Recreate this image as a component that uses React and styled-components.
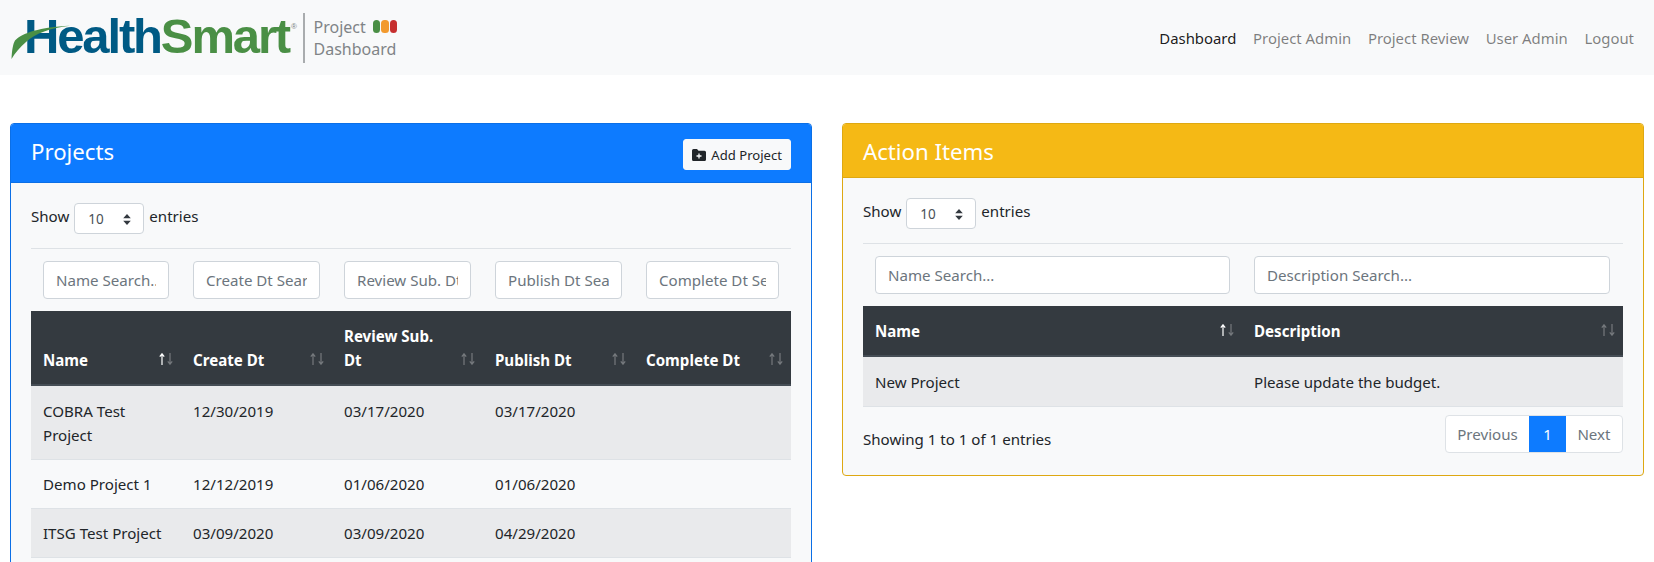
import React from "react";
import styled, { createGlobalStyle } from "styled-components";

const GlobalStyle = createGlobalStyle`
  html, body {
    margin: 0;
    padding: 0;
    background: #fff;
    overflow: hidden;
  }
  body {
    font-family: "Noto Sans", "Open Sans", sans-serif;
    font-size: 15.1px;
    line-height: 24px;
    color: #212529;
  }
  * {
    box-sizing: border-box;
  }
`;

const Page = styled.div`
  width: 1654px;
  height: 562px;
  overflow: hidden;
`;

const Navbar = styled.nav`
  display: flex;
  align-items: center;
  justify-content: space-between;
  height: 75px;
  padding: 0 20px 0 12px;
  background: #f8f9fa;
`;

const Brand = styled.div`
  display: flex;
  align-items: center;
  height: 50px;
`;

const LogoMark = styled.div`
  position: relative;
  width: 285px;
  height: 46px;
  padding-left: 12px;
  font-family: "Liberation Sans", sans-serif;
  font-weight: 700;
  font-size: 49px;
  line-height: 43px;
  letter-spacing: -2.15px;
  white-space: nowrap;
`;

const Swoosh = styled.svg`
  position: absolute;
  left: -1px;
  top: 9.5px;
`;

const LogoText = styled.span`
  color: ${(p) => p.$color};
`;

const Registered = styled.span`
  position: absolute;
  left: 279px;
  top: 8px;
  font-size: 8px;
  font-weight: 400;
  line-height: 8px;
  letter-spacing: 0;
  color: #7a7f83;
`;

const BrandRule = styled.div`
  width: 1.5px;
  height: 50px;
  margin: 0 9px 0 6px;
  background: #a9acae;
`;

const BrandTitle = styled.div`
  display: flex;
  flex-direction: column;
  font-size: 16px;
  line-height: 22px;
  color: #808487;
`;

const TitleRow = styled.div`
  display: flex;
  align-items: center;
  gap: 7px;
`;

const Lights = styled.div`
  display: flex;
  gap: 1px;
`;

const Light = styled.span`
  width: 7.5px;
  height: 13px;
  border-radius: 3.5px;
  background: ${(p) => p.$color};
`;

const NavLinks = styled.div`
  display: flex;
  gap: 16.7px;
`;

const NavLink = styled.a`
  font-size: 14.9px;
  color: ${(p) => (p.$active ? "rgba(0,0,0,0.9)" : "rgba(0,0,0,0.5)")};
`;

const Columns = styled.main`
  display: grid;
  grid-template-columns: 802px 802px;
  justify-content: space-between;
  align-items: start;
  padding: 48px 10px 0;
`;

const Card = styled.section`
  border: 1px solid ${(p) => p.$border};
  border-radius: 4px;
  background: #f8f9fa;
  overflow: hidden;
`;

const CardHeader = styled.header`
  display: flex;
  align-items: flex-start;
  justify-content: space-between;
  height: ${(p) => p.$height}px;
  padding: 0 20px;
  border-bottom: 1px solid ${(p) => p.$border};
  background: ${(p) => p.$color};
  color: #fff;
`;

const CardTitle = styled.h4`
  margin: 0;
  font-size: 22.2px;
  font-weight: 400;
  line-height: 55px;
`;

const AddButton = styled.button`
  display: flex;
  align-items: center;
  gap: 5px;
  height: 31px;
  margin-top: 15px;
  padding: 0 8px;
  border: 1px solid #f8f9fa;
  border-radius: 3px;
  background: #f8f9fa;
  color: #212529;
  font-family: inherit;
  font-size: 13.1px;
`;

const CardBody = styled.div`
  padding: 20px 20px 22px;
`;

const LengthRow = styled.div`
  display: flex;
  align-items: flex-start;
  gap: 5px;
  padding-bottom: 14px;
  border-bottom: 1px solid #dee2e6;
  line-height: 27px;
`;

const LengthSelect = styled.div`
  display: flex;
  align-items: center;
  justify-content: space-between;
  width: 70px;
  height: 31px;
  padding: 1px 12px 0 13px;
  border: 1px solid #ced4da;
  border-radius: 4px;
  background: #fff;
  color: #495057;
  font-size: 13.5px;
`;

const FilterRow = styled.div`
  display: grid;
  grid-template-columns: ${(p) => p.$cols};
  padding: 12px 0;
`;

const FilterCell = styled.div`
  padding: 0 12px;
`;

const FilterInput = styled.input`
  display: block;
  width: 100%;
  height: 38px;
  padding: 0 12px;
  border: 1px solid #ced4da;
  border-radius: 4px;
  background: #fff;
  font-family: inherit;
  font-size: 15.1px;
  color: #495057;

  &::placeholder {
    color: #6c757d;
    opacity: 1;
  }
`;

const Table = styled.table`
  width: 100%;
  border-collapse: collapse;
  table-layout: fixed;
`;

const HeadCell = styled.th`
  position: relative;
  width: ${(p) => p.$width}px;
  padding: 13px 30px 12px 12px;
  border-bottom: 2px solid #454d55;
  background: #343a40;
  color: #fff;
  font-size: 15.1px;
  font-weight: 700;
  line-height: 24px;
  text-align: left;
  vertical-align: bottom;
`;

const SortIcon = styled.svg`
  position: absolute;
  right: 8px;
  bottom: 19px;
`;

const SortArrow = styled.path`
  fill: none;
  stroke: #fff;
  stroke-width: 1.2;
  opacity: ${(p) => (p.$on ? 1 : 0.32)};
`;

const Row = styled.tr`
  background: ${(p) => (p.$striped ? "#e9eaec" : "transparent")};

  &:first-child td {
    padding-top: 13px;
  }
`;

const Cell = styled.td`
  padding: 12px;
  border-bottom: 1px solid #dee2e6;
  font-size: 15.1px;
  line-height: 24px;
  vertical-align: top;
`;

const TableFooter = styled.div`
  display: flex;
  align-items: flex-start;
  justify-content: space-between;
  padding-top: 8px;
`;

const FooterInfo = styled.div`
  padding-top: 12px;
`;

const Pager = styled.div`
  display: flex;
  height: 38px;
  border: 1px solid #dee2e6;
  border-radius: 4px;
  background: #fff;
  overflow: hidden;
`;

const PageItem = styled.span`
  display: flex;
  align-items: center;
  padding: 0 ${(p) => (p.$active ? 14 : 11.5)}px;
  background: ${(p) => (p.$active ? "#0d7bff" : "transparent")};
  color: ${(p) => (p.$active ? "#fff" : "#6c757d")};
`;

const projects = [
  ["COBRA Test Project", "12/30/2019", "03/17/2020", "03/17/2020", ""],
  ["Demo Project 1", "12/12/2019", "01/06/2020", "01/06/2020", ""],
  ["ITSG Test Project", "03/09/2020", "03/09/2020", "04/29/2020", ""],
];

const projectCols = [
  { name: "Name", search: "Name Search...", width: 150, on: true },
  { name: "Create Dt", search: "Create Dt Search...", width: 151 },
  { name: "Review Sub. Dt", search: "Review Sub. Dt Search...", width: 151 },
  { name: "Publish Dt", search: "Publish Dt Search...", width: 151 },
  { name: "Complete Dt", search: "Complete Dt Search...", width: 157 },
];

const Sort = ({ on }) => (
  <SortIcon width="14" height="12" viewBox="0 0 14 12">
    <SortArrow $on={on} d="M3 12V1M.8 3.600L3 .8l2.200 2.800" />
    <SortArrow d="M11 0v11M8.800 8.400L11 11.200l2.200-2.800" />
  </SortIcon>
);

const Logo = () => (
  <LogoMark>
    <LogoText $color="#005a84">Health</LogoText>
    <LogoText $color="#4a8f45">Smart</LogoText>
    <Registered>®</Registered>
    <Swoosh width="60" height="36" viewBox="0 0 60 36">
      <path
        d="M.5 35C1 26 2 20 4 16.500C11 9 29 3 59 1.700C39 4 25 9 15 18C9 23 4 29 .5 35Z"
        fill="#4a8f45"
      />
    </Swoosh>
  </LogoMark>
);

const FolderPlus = () => (
  <svg width="14" height="12" viewBox="0 0 14 12">
    <path
      d="M1.500 0h3.500l1.500 1.800h6a1.500 1.500 0 0 1 1.500 1.500v7.200a1.500 1.500 0 0 1-1.500 1.500h-11a1.500 1.500 0 0 1-1.500-1.500v-9a1.500 1.500 0 0 1 1.500-1.500z"
      fill="#212529"
    />
    <path d="M7 4.500v5M4.500 7h5" stroke="#f8f9fa" strokeWidth="1.300" />
  </svg>
);

const SelectCaret = () => (
  <svg width="8" height="11" viewBox="0 0 8 11">
    <path d="M4 0L7.800 4.300H.2zM4 11L.2 6.700h7.600z" fill="#343a40" />
  </svg>
);

const Length = () => (
  <LengthRow>
    Show
    <LengthSelect>
      10
      <SelectCaret />
    </LengthSelect>
    entries
  </LengthRow>
);

export default function App() {
  return (
    <Page>
      <GlobalStyle />
      <Navbar>
        <Brand>
          <Logo />
          <BrandRule />
          <BrandTitle>
            <TitleRow>
              Project
              <Lights>
                <Light $color="#4a8f45" />
                <Light $color="#f29a2e" />
                <Light $color="#c62f2f" />
              </Lights>
            </TitleRow>
            Dashboard
          </BrandTitle>
        </Brand>
        <NavLinks>
          <NavLink $active>Dashboard</NavLink>
          <NavLink>Project Admin</NavLink>
          <NavLink>Project Review</NavLink>
          <NavLink>User Admin</NavLink>
          <NavLink>Logout</NavLink>
        </NavLinks>
      </Navbar>
      <Columns>
        <Card $border="#0b6fe6">
          <CardHeader $color="#0d7bff" $border="#0b6fe6" $height={59}>
            <CardTitle>Projects</CardTitle>
            <AddButton>
              <FolderPlus />
              Add Project
            </AddButton>
          </CardHeader>
          <CardBody>
            <Length />
            <FilterRow $cols="150px 151px 151px 151px 157px">
              {projectCols.map((c) => (
                <FilterCell key={c.name}>
                  <FilterInput placeholder={c.search} />
                </FilterCell>
              ))}
            </FilterRow>
            <Table>
              <thead>
                <tr>
                  {projectCols.map((c) => (
                    <HeadCell key={c.name} $width={c.width}>
                      {c.name}
                      <Sort on={c.on} />
                    </HeadCell>
                  ))}
                </tr>
              </thead>
              <tbody>
                {projects.map((p, i) => (
                  <Row key={p[0]} $striped={i % 2 === 0}>
                    {p.map((v, j) => (
                      <Cell key={j}>{v}</Cell>
                    ))}
                  </Row>
                ))}
              </tbody>
            </Table>
          </CardBody>
        </Card>
        <Card $border="#dea812">
          <CardHeader $color="#f5b915" $border="#dea812" $height={54}>
            <CardTitle>Action Items</CardTitle>
          </CardHeader>
          <CardBody>
            <Length />
            <FilterRow $cols="379px 380px">
              <FilterCell>
                <FilterInput placeholder="Name Search..." />
              </FilterCell>
              <FilterCell>
                <FilterInput placeholder="Description Search..." />
              </FilterCell>
            </FilterRow>
            <Table>
              <thead>
                <tr>
                  <HeadCell $width={379}>
                    Name
                    <Sort on />
                  </HeadCell>
                  <HeadCell $width={381}>
                    Description
                    <Sort />
                  </HeadCell>
                </tr>
              </thead>
              <tbody>
                <Row $striped>
                  <Cell>New Project</Cell>
                  <Cell>Please update the budget.</Cell>
                </Row>
              </tbody>
            </Table>
            <TableFooter>
              <FooterInfo>Showing 1 to 1 of 1 entries</FooterInfo>
              <Pager>
                <PageItem>Previous</PageItem>
                <PageItem $active>1</PageItem>
                <PageItem>Next</PageItem>
              </Pager>
            </TableFooter>
          </CardBody>
        </Card>
      </Columns>
    </Page>
  );
}
